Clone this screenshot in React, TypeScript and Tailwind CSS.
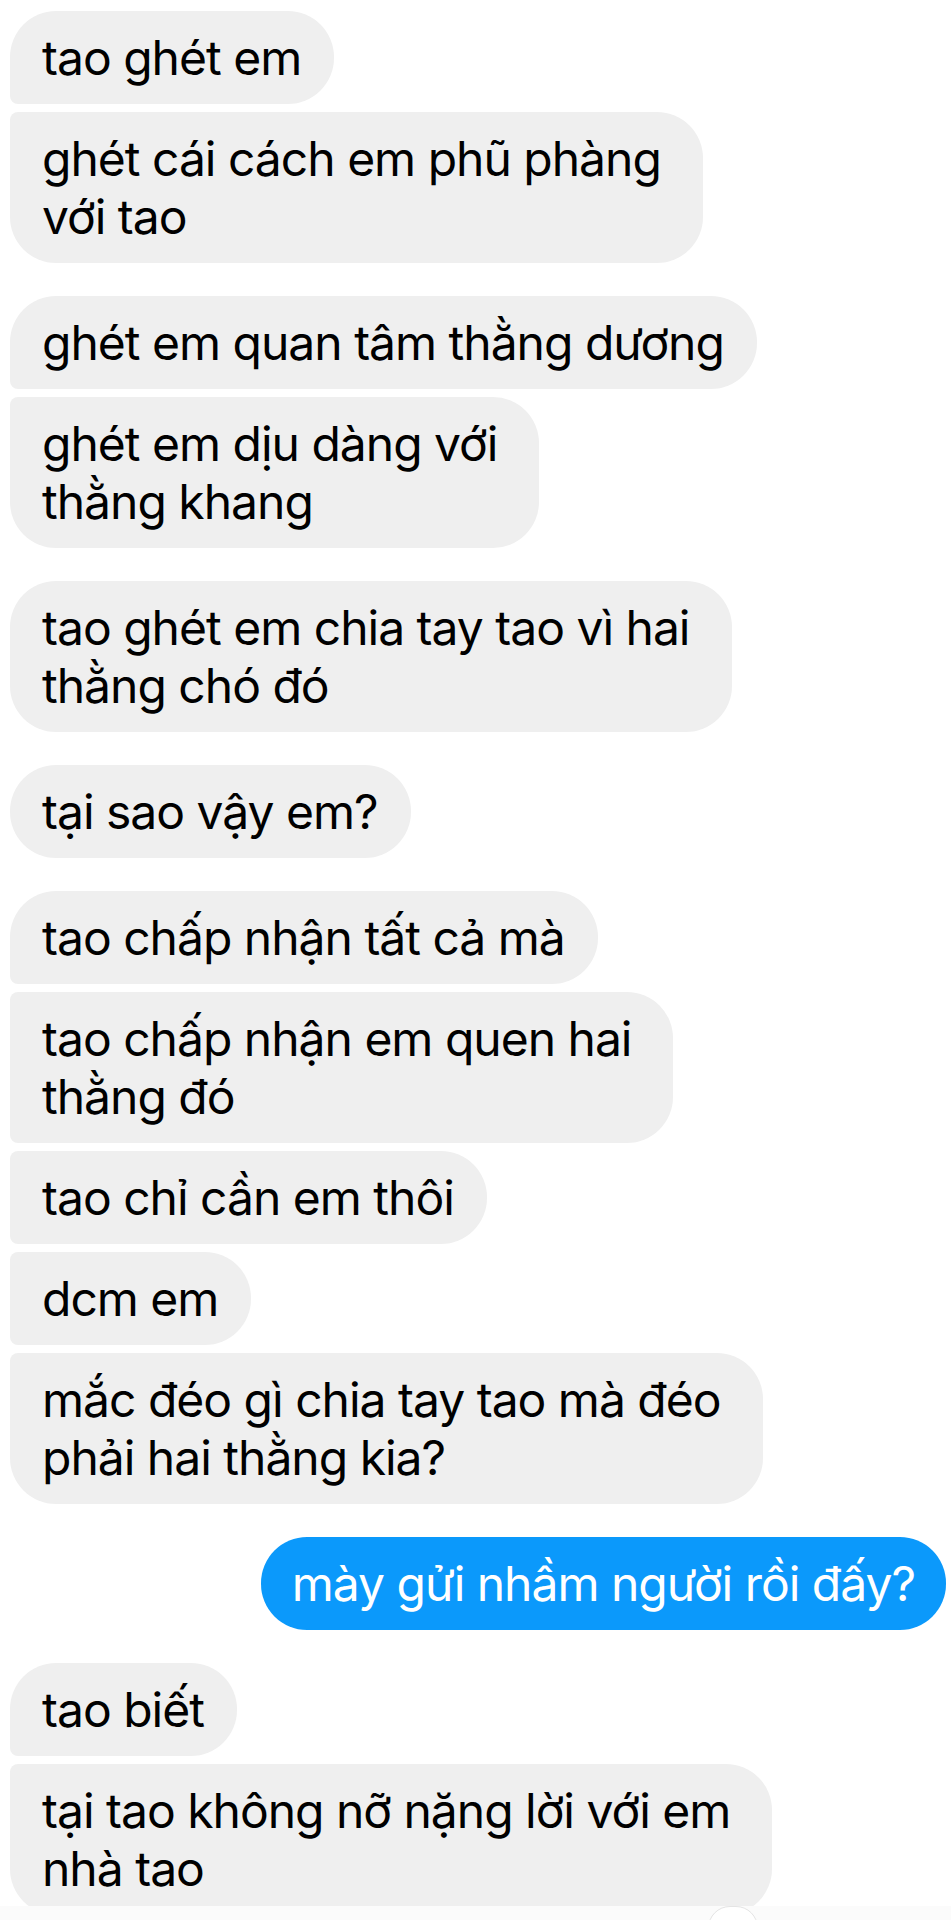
import React from 'react'

type Msg = {
  lines: string[]
  mine?: boolean
  corners: string
  gap: string
}

// big radius on the right always for received; left side depends on position in group
const FIRST = 'rounded-tl-[46px] rounded-bl-[8px]'
const MIDDLE = 'rounded-tl-[8px] rounded-bl-[8px]'
const LAST = 'rounded-tl-[8px] rounded-bl-[46px]'
const SINGLE = 'rounded-tl-[46px] rounded-bl-[46px]'

const messages: Msg[] = [
  { lines: ['tao ghét em'], corners: FIRST, gap: 'mt-0' },
  { lines: ['ghét cái cách em phũ phàng', 'với tao'], corners: LAST, gap: 'mt-[8px]' },
  { lines: ['ghét em quan tâm thằng dương'], corners: FIRST, gap: 'mt-[33px]' },
  { lines: ['ghét em dịu dàng với', 'thằng khang'], corners: LAST, gap: 'mt-[8px]' },
  { lines: ['tao ghét em chia tay tao vì hai', 'thằng chó đó'], corners: SINGLE, gap: 'mt-[33px]' },
  { lines: ['tại sao vậy em?'], corners: SINGLE, gap: 'mt-[33px]' },
  { lines: ['tao chấp nhận tất cả mà'], corners: FIRST, gap: 'mt-[33px]' },
  { lines: ['tao chấp nhận em quen hai', 'thằng đó'], corners: MIDDLE, gap: 'mt-[8px]' },
  { lines: ['tao chỉ cần em thôi'], corners: MIDDLE, gap: 'mt-[8px]' },
  { lines: ['dcm em'], corners: MIDDLE, gap: 'mt-[8px]' },
  { lines: ['mắc đéo gì chia tay tao mà đéo', 'phải hai thằng kia?'], corners: LAST, gap: 'mt-[8px]' },
  { lines: ['mày gửi nhầm người rồi đấy?'], mine: true, corners: '', gap: 'mt-[33px]' },
  { lines: ['tao biết'], corners: FIRST, gap: 'mt-[33px]' },
  { lines: ['tại tao không nỡ nặng lời với em', 'nhà tao'], corners: LAST, gap: 'mt-[8px]' },
]

function Bubble({ msg }: { msg: Msg }) {
  if (msg.mine) {
    return (
      <div className={`${msg.gap} self-end rounded-[46px] bg-[#0b99fb] px-[31px] py-[17.5px] text-white`}>
        {msg.lines.map((l, i) => (
          <div key={i} className="whitespace-nowrap">{l}</div>
        ))}
      </div>
    )
  }
  // wrapped messages sit in a slightly wider box than their longest line
  const pad = msg.lines.length > 1 ? 'pr-[42px]' : 'pr-[33px]'
  return (
    <div className={`${msg.gap} ${msg.corners} ${pad} rounded-tr-[46px] rounded-br-[46px] bg-[#efefef] pl-[32px] py-[17.5px] text-black`}>
      {msg.lines.map((l, i) => (
        <div key={i} className="whitespace-nowrap">{l}</div>
      ))}
    </div>
  )
}

export default function App() {
  return (
    <div className="relative w-[951px] h-[1920px] overflow-hidden bg-white font-['Inter','Noto_Sans',sans-serif] text-[48px] leading-[58px] tracking-[-1px]">
      <div className="flex flex-col items-start pt-[11px] pl-[10px] pr-[5px]">
        {messages.map((m, i) => (
          <Bubble key={i} msg={m} />
        ))}
      </div>
      {/* faint strip at the bottom edge, with the top of a reaction badge peeking in */}
      <div className="absolute left-0 right-0 bottom-0 h-[14px] bg-[#fbfbfb]" />
      <div className="absolute left-[708px] bottom-[-30px] w-[50px] h-[44px] rounded-full bg-white border border-[#e4e4e4]" />
    </div>
  )
}
